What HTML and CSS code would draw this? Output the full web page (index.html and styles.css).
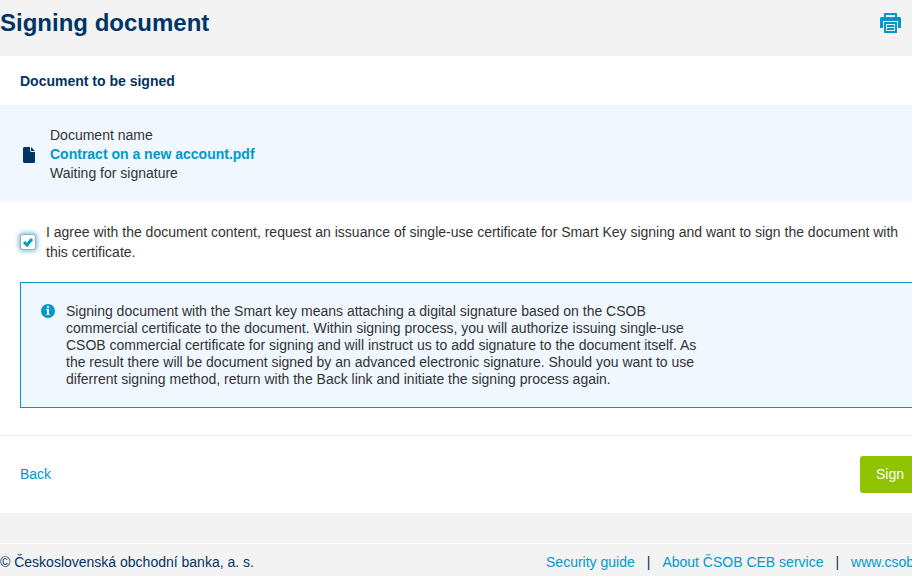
FILE: index.html
```html
<!DOCTYPE html>
<html lang="en">
    <head>
        <meta charset="UTF-8" />
        <meta name="viewport" content="width=device-width" />
        <title>Signing document</title>
        <link rel="stylesheet" href="styles.css">
    </head>
    <body>
        <div class="page">
            <header class="page-header">
                <h1>Signing document</h1>
                <button type="button" class="print" aria-label="Print">
                    <svg width="21" height="20" viewBox="0 0 21 20">
                        <path fill="#0099cc" fill-rule="evenodd" d="M4 0h13v4h3l1 1v10h-4v5H4v-5H0V5l1-1h3zM6 2v2h9V2z" />
                        <path fill="#f3f3f3" fill-rule="evenodd" d="M3 8h15v7h-1V9H4v6H3z" />
                        <path fill="#f3f3f3" fill-rule="evenodd" d="M6 11h9v7H6zM7 12v2h7v-2zM7 15v2h7v-2z" />
                    </svg>
                </button>
            </header>

            <main>
                <h2>Document to be signed</h2>

                <section class="document">
                    <svg class="file-icon" width="12" height="16" viewBox="0 0 12 16">
                        <path fill="#003366" d="M1 0h6v4l1 1h4v10l-1 1H1l-1-1V1zM8 0l4 4H8z" />
                    </svg>
                    <div>
                        <div>Document name</div>
                        <a href="#" class="document-link">Contract on a new account.pdf</a>
                        <div>Waiting for signature</div>
                    </div>
                </section>

                <form>
                    <div class="agree">
                        <input type="checkbox" id="agree" checked />
                        <label for="agree">I agree with the document content, request an issuance of single-use certificate for Smart Key signing and want to sign the document with this certificate.</label>
                    </div>

                    <div class="info">
                        <svg class="info-icon" width="14" height="14" viewBox="0 0 14 14">
                            <circle cx="7" cy="7" r="7" fill="#0099cc" />
                            <path fill="#ffffff" d="M6 2h2v2H6zM5 5h3v5h1v1H5v-1h1V6H5z" />
                        </svg>
                        <p>Signing document with the Smart key means attaching a digital signature based on the CSOB commercial certificate to the document. Within signing process, you will authorize issuing single-use CSOB commercial certificate for signing and will instruct us to add signature to the document itself. As the result there will be document signed by an advanced electronic signature. Should you want to use diferrent signing method, return with the Back link and initiate the signing process again.</p>
                    </div>

                    <div class="actions">
                        <a href="#">Back</a>
                        <button type="submit" class="sign">Sign</button>
                    </div>
                </form>
            </main>

            <footer>
                <span>© Československá obchodní banka, a. s.</span>
                <nav>
                    <a href="#">Security guide</a>
                    <span>|</span>
                    <a href="#">About ČSOB CEB service</a>
                    <span>|</span>
                    <a href="#">www.csob.cz</a>
                </nav>
            </footer>
        </div>
    </body>
</html>
```
FILE: styles.css
```css
* {
    box-sizing: border-box;
}

html {
    overflow: hidden;
    background-color: #f3f3f3;
}

body {
    margin: 0;
    font-family: "Liberation Sans", Arial, sans-serif;
    font-size: 14px;
    line-height: 19px;
    color: #333333;
}

h1, h2, p {
    margin: 0;
}

a {
    color: #0099cc;
    text-decoration: none;
}

/* the page is a little wider than the window */
.page {
    margin-right: -28px;
}

.page-header {
    display: flex;
    justify-content: space-between;
    align-items: flex-start;
    padding: 8px 39px 18px 0;
}

h1 {
    font-size: 24px;
    line-height: 30px;
    color: #003366;
}

.print {
    margin-top: 5px;
    padding: 0;
    border: 0;
    background: none;
    cursor: pointer;
}

.print svg {
    display: block;
}

main {
    background-color: #ffffff;
}

h2 {
    padding: 16px 20px 14px;
    font-size: 14px;
    color: #003366;
}

.document {
    display: flex;
    align-items: center;
    gap: 15px;
    padding: 21px 23px 19px;
    background-color: #f0f7ff;
}

.document-link {
    font-weight: bold;
}

.agree {
    display: flex;
    align-items: center;
    gap: 10px;
    padding: 20px;
    line-height: 20px;
}

.agree input {
    appearance: none;
    flex: none;
    width: 16px;
    height: 16px;
    margin: 0;
    border: 1px solid #aaaaaa;
    border-radius: 3px;
    background: #ffffff url("data:image/svg+xml,%3Csvg xmlns='http://www.w3.org/2000/svg' viewBox='0 0 14 14'%3E%3Cpath d='M3 7l3 3 5-6' fill='none' stroke='%230099cc' stroke-width='3'/%3E%3C/svg%3E");
    box-shadow: 0 0 5px 1px #66bbdd;
}

.info {
    display: flex;
    gap: 11px;
    margin: 0 20px;
    padding: 20px 20px 19px;
    border: 1px solid #0099cc;
    background-color: #f0f7ff;
}

.info p {
    max-width: 640px;
    line-height: 17px;
}

.info-icon {
    flex: none;
    margin-top: 1px;
}

.actions {
    display: flex;
    justify-content: space-between;
    align-items: center;
    margin-top: 27px;
    padding: 20px;
    border-top: 1px solid #f0f0f0;
}

.sign {
    height: 37px;
    padding: 0 16px;
    border: 0;
    border-radius: 3px;
    background-color: #90c300;
    color: #ffffff;
    font: inherit;
    cursor: pointer;
}

footer {
    display: flex;
    justify-content: space-between;
    margin-top: 30px;
    padding: 9px 8px 9px 0;
    border-top: 1px solid #ffffff;
    color: #003366;
}

nav {
    display: flex;
    gap: 12px;
}
```
